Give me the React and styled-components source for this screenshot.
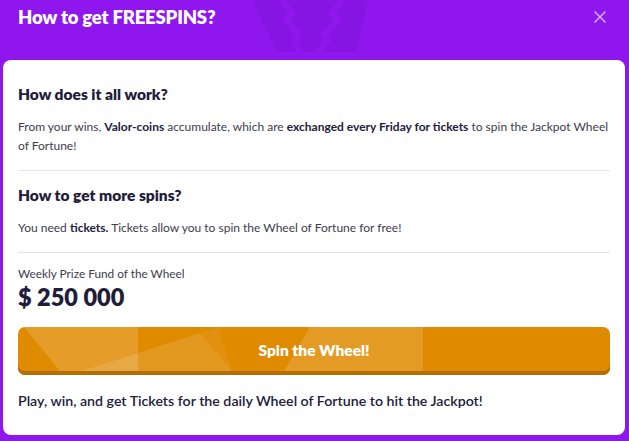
import React from "react";
import styled, { createGlobalStyle } from "styled-components";

const Global = createGlobalStyle`
  html, body {
    margin: 0;
    padding: 0;
    background: #8f17ee;
  }
  body {
    font-family: "Lato", "Noto Sans", sans-serif;
  }
  * { box-sizing: border-box; }
`;

const Modal = styled.div`
  width: 629px;
  height: 441px;
  background: #8f17ee;
  display: flex;
  flex-direction: column;
  position: relative;
  overflow: hidden;
`;

const Header = styled.header`
  height: 60px;
  display: flex;
  align-items: flex-start;
  justify-content: space-between;
  padding: 6px 22px 0 18px;
  position: relative;
`;

const Title = styled.h1`
  margin: 0;
  color: #fff;
  font-size: 18.5px;
  font-weight: 800;
  letter-spacing: -0.2px;
  position: relative;
  z-index: 1;
`;

const Close = styled.button`
  background: none;
  border: 0;
  padding: 0;
  margin-top: 5px;
  width: 14px;
  height: 14px;
  cursor: pointer;
  position: relative;
  z-index: 1;
`;

const Emblem = styled.svg`
  position: absolute;
  left: 252px;
  top: 0;
`;

const Card = styled.main`
  flex: 1;
  margin: 0 4px 6px 3px;
  background: #fff;
  border-radius: 8px;
  padding: 25px 15px 0 15px;
  display: flex;
  flex-direction: column;
`;

const Section = styled.section`
  padding-bottom: 15px;
  margin-bottom: 15px;
  border-bottom: 1px solid #e3e3e8;
`;

const Heading = styled.h2`
  margin: 0 0 13px;
  font-size: 15.5px;
  line-height: 19px;
  font-weight: 800;
  color: #1f1d3b;
`;

const Text = styled.p`
  margin: 0;
  font-size: 12px;
  line-height: 19px;
  color: #3d3c4c;
  b { font-weight: 700; color: #23213b; }
`;

const Fund = styled.div`
  display: flex;
  flex-direction: column;
  gap: 2px;
  margin-top: -2px;
`;

const FundLabel = styled.span`
  font-size: 11.8px;
  line-height: 15px;
  color: #3d3c4c;
`;

const Amount = styled.span`
  font-size: 23.5px;
  line-height: 28px;
  font-weight: 800;
  color: #1f1d3b;
`;

const SpinButton = styled.button`
  position: relative;
  overflow: hidden;
  margin-top: 16px;
  height: 48px;
  width: 592px;
  border: 0;
  border-radius: 7px;
  background: #e08a00;
  box-shadow: inset 0 -4px 0 #b46e06;
  color: #fff;
  font-family: inherit;
  font-size: 15.5px;
  font-weight: 800;
  padding: 0 0 3px;
  cursor: pointer;
  span { position: relative; z-index: 1; }
  svg { position: absolute; left: 0; top: 0; }
`;

const Footer = styled.p`
  margin: 17px 0 0;
  font-size: 14.2px;
  line-height: 18px;
  font-weight: 600;
  color: #22203c;
`;

export default function App() {
  return (
    <Modal>
      <Global />
      <Header>
        <Emblem width="116" height="52" viewBox="0 0 116 52">
          <path d="M0 0 L116 0 L105 52 L25 52 Z" fill="#8615e4" />
          <path d="M30 0 L40 14 L34 20 L46 34 L42 40 L48 52" fill="none" stroke="#8f17ee" strokeWidth="6" />
          <path d="M90 0 L80 14 L86 20 L72 34 L76 40 L66 52" fill="none" stroke="#8f17ee" strokeWidth="6" />
        </Emblem>
        <Title>How to get FREESPINS?</Title>
        <Close aria-label="Close">
          <svg width="12" height="12" viewBox="0 0 12 12">
            <path d="M1 1 L11 11 M11 1 L1 11" stroke="#d9b8fb" strokeWidth="1.4" strokeLinecap="round" />
          </svg>
        </Close>
      </Header>
      <Card>
        <Section>
          <Heading>How does it all work?</Heading>
          <Text>
            From your wins, <b>Valor-coins</b> accumulate, which are <b>exchanged every Friday for tickets</b> to spin the Jackpot Wheel of Fortune!
          </Text>
        </Section>
        <Section>
          <Heading>How to get more spins?</Heading>
          <Text>
            You need <b>tickets.</b> Tickets allow you to spin the Wheel of Fortune for free!
          </Text>
        </Section>
        <Fund>
          <FundLabel>Weekly Prize Fund of the Wheel</FundLabel>
          <Amount>$ 250 000</Amount>
        </Fund>
        <SpinButton>
          <svg width="592" height="48" viewBox="0 0 592 48">
            <path d="M6 0 L120 0 L120 44 L42 44 Z" fill="#fff" opacity="0.16" />
            <path d="M64 44 L182 6 L214 44 Z" fill="#fff" opacity="0.12" />
            <path d="M182 6 L200 0 L214 44 Z" fill="#fff" opacity="0.06" />
            <path d="M292 0 L405 0 L405 44 L266 44 Z" fill="#fff" opacity="0.15" />
          </svg>
          <span>Spin the Wheel!</span>
        </SpinButton>
        <Footer>Play, win, and get Tickets for the daily Wheel of Fortune to hit the Jackpot!</Footer>
      </Card>
    </Modal>
  );
}
